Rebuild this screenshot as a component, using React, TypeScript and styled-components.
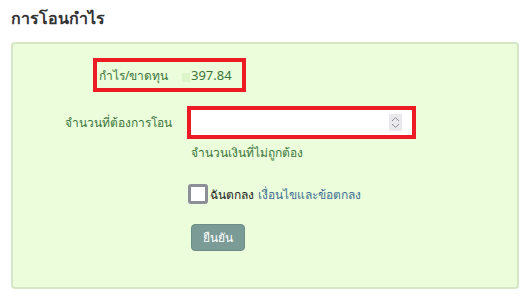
import React from "react";
import styled, { createGlobalStyle } from "styled-components";

const Global = createGlobalStyle`
  html, body { margin: 0; padding: 0; background: #ffffff; }
  body { font-family: "Noto Sans", "DejaVu Sans", sans-serif; }
  * { box-sizing: border-box; }
`;

const Page = styled.div`
  padding: 6px 12px 0 11px;
  width: 531px;
`;

const Title = styled.h3`
  margin: 0 0 12px 0;
  font-size: 16px;
  font-weight: 600;
  color: #333333;
  line-height: 24px;
  padding-left: 0;
`;

const Panel = styled.div`
  width: 508px;
  height: 247px;
  background: #ebfdda;
  border: 2px solid #d5e7c7;
  border-radius: 4px;
  padding: 14px 0 0 0;
  display: flex;
  flex-direction: column;
`;

const Row = styled.div<{ $mt?: number }>`
  display: grid;
  grid-template-columns: 159px 1fr;
  column-gap: 19px;
  align-items: center;
  margin-top: ${(p) => p.$mt ?? 0}px;
`;

const Label = styled.label`
  text-align: right;
  font-size: 12px;
  color: #3c763d;
`;

const Highlight = styled.div`
  border: 4px solid #ed1c24;
`;

const ProfitBox = styled(Highlight)`
  margin-left: 80px;
  width: 153px;
  height: 34px;
  display: flex;
  align-items: center;
  padding-left: 2px;
  font-size: 12px;
  color: #3c763d;
`;

const ProfitLabel = styled.span`
  width: 70px;
`;

const Swatch = styled.span`
  display: inline-block;
  width: 8px;
  height: 9px;
  background: #dcf5c9;
  margin: 4px 1px 0 13px;
`;

const Value = styled.span`
  font-size: 13px;
`;

const InputBox = styled(Highlight)`
  width: 229px;
  height: 33px;
  background: #ffffff;
  margin-left: -4px;
  display: flex;
  align-items: center;
  justify-content: flex-end;
  padding-right: 10px;
`;

const Spinner = styled.div`
  width: 13px;
  height: 17px;
  background: #e9e9ed;
  display: flex;
  align-items: center;
  justify-content: center;
`;

const Help = styled.div`
  font-size: 12px;
  color: #3c763d;
`;

const CheckRow = styled.div`
  display: flex;
  align-items: center;
  font-size: 12px;
  margin-left: -3px;
`;

const Box = styled.span`
  width: 20px;
  height: 20px;
  border: 3px solid #8e8e98;
  border-radius: 3px;
  background: #fff;
  margin-right: 2px;
`;

const Agree = styled.span`
  color: #222;
`;

const Link = styled.a`
  color: #3f6f95;
  text-decoration: none;
  margin-left: 4px;
`;

const Button = styled.button`
  width: 54px;
  height: 27px;
  border: 1px solid #6c8d88;
  border-radius: 4px;
  background: #7a9b96;
  color: #ffffff;
  font-family: inherit;
  font-size: 12px;
  padding: 0;
`;

export default function App() {
  return (
    <>
      <Global />
      <Page>
        <Title>การโอนกำไร</Title>
        <Panel>
          <ProfitBox>
            <ProfitLabel>กำไร/ขาดทุน</ProfitLabel>
            <Swatch />
            <Value>397.84</Value>
          </ProfitBox>
          <Row $mt={14}>
            <Label>จำนวนที่ต้องการโอน</Label>
            <InputBox>
              <Spinner>
                <svg width="9" height="13" viewBox="0 0 9 13">
                  <path d="M1 5 L4.5 1.5 L8 5 M1 8 L4.5 11.5 L8 8" stroke="#8c8c96" strokeWidth="1" fill="none" />
                </svg>
              </Spinner>
            </InputBox>
          </Row>
          <Row $mt={4}>
            <span />
            <Help>จำนวนเงินที่ไม่ถูกต้อง</Help>
          </Row>
          <Row $mt={22}>
            <span />
            <CheckRow>
              <Box />
              <Agree>ฉันตกลง</Agree>
              <Link href="#">เงื่อนไขและข้อตกลง</Link>
            </CheckRow>
          </Row>
          <Row $mt={20}>
            <span />
            <div>
              <Button>ยืนยัน</Button>
            </div>
          </Row>
        </Panel>
      </Page>
    </>
  );
}
